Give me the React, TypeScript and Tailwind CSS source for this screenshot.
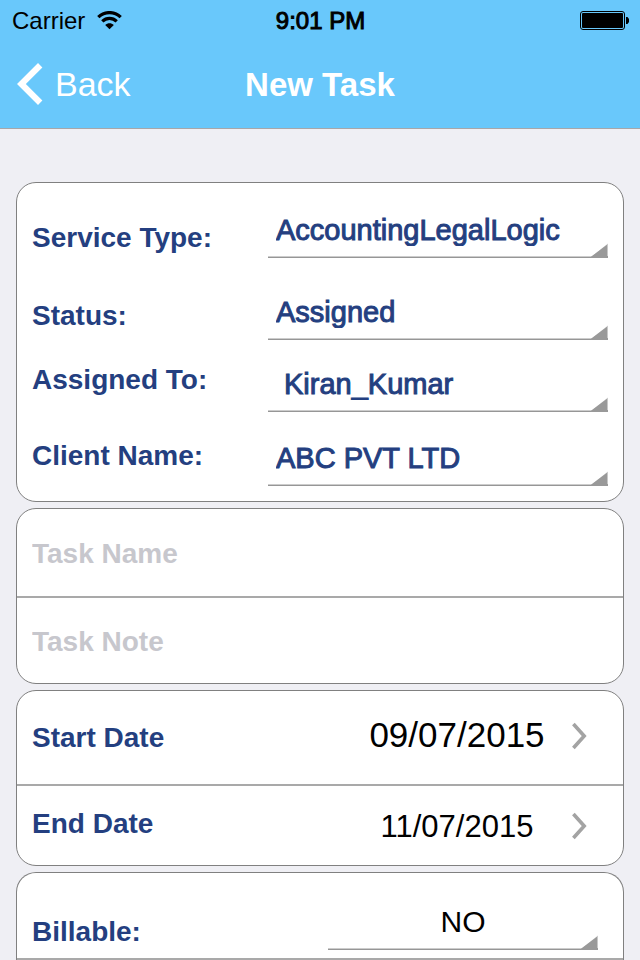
import type { ReactNode } from 'react';

type SelectFieldProps = {
  id: string;
  options: string[];
  className: string;
};

function SelectField({ id, options, className }: SelectFieldProps) {
  return (
    <div className="relative min-w-0 flex-1">
      <select
        id={id}
        className={`block h-11 w-full appearance-none rounded-none border-b border-[#969696] bg-transparent pb-[11px] leading-8 shadow-[inset_0_-1px_0_#cccccc] outline-none ${className}`}
      >
        {options.map((option) => (
          <option key={option}>{option}</option>
        ))}
      </select>
      <svg
        className="pointer-events-none absolute right-0 bottom-0 h-[15px] w-[17px]"
        viewBox="0 0 17 15"
        aria-hidden="true"
      >
        <path d="M17 0.5V15H0V14z" fill="#c8c8c8" />
        <path d="M16 1.8V13H17V15H0V13.8z" fill="#999999" />
      </svg>
    </div>
  );
}

function Chevron() {
  return (
    <svg className="h-7 w-4 shrink-0" viewBox="0 0 16 28" fill="none" aria-hidden="true">
      <path d="M1.4 2L12.2 14L1.4 26" stroke="#a3a3a3" strokeWidth="3.6" />
    </svg>
  );
}

function Card({ children }: { children: ReactNode }) {
  return (
    <section className="overflow-hidden rounded-[20px] border border-[#808080] bg-white">
      {children}
    </section>
  );
}

const labelText = 'text-[28px] leading-8 font-bold text-[#243f80]';
const valueText = 'text-[29px] text-[#243f80] [-webkit-text-stroke:1px_#243f80]';

const assignment = [
  { id: 'service', label: 'Service Type:', value: 'AccountingLegalLogic', row: 'h-[75px]', pad: 'pb-1', indent: 'pl-2' },
  { id: 'status', label: 'Status:', value: 'Assigned', row: 'h-[82px]', pad: 'pb-2', indent: 'pl-2' },
  { id: 'assignee', label: 'Assigned To:', value: 'Kiran_Kumar', row: 'h-[72px]', pad: 'pb-4', indent: 'pl-4' },
  { id: 'client', label: 'Client Name:', value: 'ABC PVT LTD', row: 'h-[74px]', pad: 'pb-3.5', indent: 'pl-2' },
];

const dates = [
  { id: 'start', label: 'Start Date', value: '09/07/2015', row: 'h-[95px] border-b-2 border-[#a9a9a9]', text: 'text-[35px] pb-1.5', pad: '', chevron: 'pb-1' },
  { id: 'end', label: 'End Date', value: '11/07/2015', row: 'h-[79px]', text: 'text-[31px] pt-0.5', pad: 'pb-1', chevron: '' },
];

export default function App() {
  return (
    <div className="flex h-screen flex-col overflow-hidden bg-[#efeff4] font-['Liberation_Sans',Arial,sans-serif]">
      <header className="shrink-0 border-b border-[#a7a7aa] bg-[#69c8fb]">
        <div className="grid h-10 grid-cols-3 items-center pt-px pr-[11px] pl-3 text-2xl leading-8 text-black">
          <div className="flex items-center gap-3">
            <span>Carrier</span>
            <svg className="h-[19px] w-[25px]" viewBox="0 0 25 19" fill="none" aria-label="Wi-Fi">
              <path d="M1.3 6.2C7.6 0 17.4 0 23.7 6.2" stroke="#000" strokeWidth="3.2" />
              <path d="M5.3 10.3C9.4 6.3 15.6 6.3 19.7 10.3" stroke="#000" strokeWidth="3.2" />
              <path d="M12.5 18.2L8.2 14C10.7 11.6 14.3 11.6 16.8 14z" fill="#000" />
            </svg>
          </div>
          <span className="text-center [-webkit-text-stroke:1px_#000]">9:01 PM</span>
          <svg className="h-[19px] w-[49px] justify-self-end" viewBox="0 0 49 19" fill="none" aria-label="Battery full">
            <rect x="0.5" y="0.5" width="44" height="18" rx="2.5" stroke="#000" />
            <rect x="2" y="2" width="41" height="15" rx="1" fill="#000" />
            <path d="M46 6H47.5L49 8V11L47.5 13H46z" fill="#000" />
          </svg>
        </div>
        <nav className="grid h-[88px] grid-cols-3 items-center px-4 text-white">
          <button type="button" className="flex items-center gap-3 text-[34px] leading-10">
            <svg className="h-[42px] w-[27px]" viewBox="0 0 27 42" fill="none" aria-hidden="true">
              <path d="M24.2 2.2L5.4 21L24.2 39.8" stroke="#fff" strokeWidth="6.2" />
            </svg>
            Back
          </button>
          <h1 className="pt-0.5 text-center text-[33px] leading-10 font-bold">New Task</h1>
        </nav>
      </header>

      <main className="min-h-0 flex-1 overflow-y-auto [scrollbar-width:none]">
        <form className="flex flex-col gap-1.5 px-4 pt-[53px]">
          <Card>
            <div className="px-[15px] pb-[15px]">
              {assignment.map((field) => (
                <div key={field.id} className={`flex items-end ${field.row}`}>
                  <label htmlFor={field.id} className={`w-[236px] shrink-0 ${labelText} ${field.pad}`}>
                    {field.label}
                  </label>
                  <SelectField id={field.id} options={[field.value]} className={`${valueText} ${field.indent}`} />
                </div>
              ))}
            </div>
          </Card>

          <Card>
            <input
              type="text"
              aria-label="Task Name"
              placeholder="Task Name"
              className="block h-[89px] w-full border-b-2 border-[#a9a9a9] px-[15px] pt-0.5 text-[28px] font-bold text-[#243f80] outline-none placeholder:text-[#c7c7cd]"
            />
            <input
              type="text"
              aria-label="Task Note"
              placeholder="Task Note"
              className="block h-[85px] w-full px-[15px] pt-0.5 text-[28px] font-bold text-[#243f80] outline-none placeholder:text-[#c7c7cd]"
            />
          </Card>

          <Card>
            {dates.map((date) => (
              <div key={date.id} className={`flex items-center justify-between pr-[35px] pl-[15px] ${date.row}`}>
                <label htmlFor={date.id} className={`${labelText} ${date.pad}`}>
                  {date.label}
                </label>
                <button id={date.id} type="button" className="flex items-center gap-[15px] text-black">
                  <span className={`w-[200px] text-center leading-10 ${date.text}`}>{date.value}</span>
                  <span className={date.chevron}>
                    <Chevron />
                  </span>
                </button>
              </div>
            ))}
          </Card>

          <section className="rounded-t-[20px] border-x border-t border-[#808080] bg-white">
            <div className="flex h-[87px] items-end border-b-2 border-[#a9a9a9] pr-[25px] pb-2 pl-[15px]">
              <label htmlFor="billable" className={`w-[296px] shrink-0 pb-0.5 ${labelText}`}>
                Billable:
              </label>
              <SelectField id="billable" options={['NO', 'YES']} className="text-[30px] text-black [text-align-last:center]" />
            </div>
          </section>
        </form>
      </main>
    </div>
  );
}
